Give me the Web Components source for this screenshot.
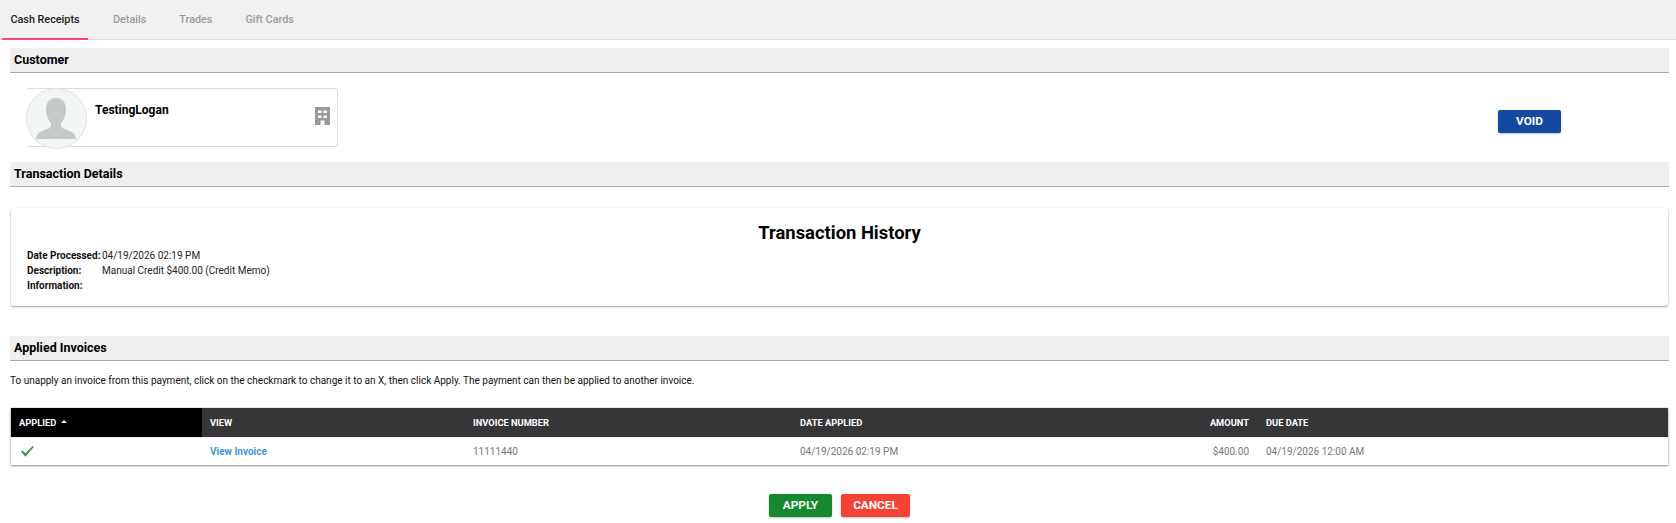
<!DOCTYPE html>
<html>
<head>
<meta charset="utf-8">
<style>
  html, body { margin: 0; padding: 0; background: #fff; }
  body { font-family: Roboto, "Liberation Sans", sans-serif; color: #000; }
</style>
</head>
<body>
<cr-page>
  <tab-bar></tab-bar>
  <section-head style="margin-top:8px">Customer</section-head>
  <customer-row name="TestingLogan"></customer-row>
  <section-head style="margin-top:10px">Transaction Details</section-head>
  <history-card></history-card>
  <section-head style="margin-top:30px">Applied Invoices</section-head>
  <p-note>To unapply an invoice from this payment, click on the checkmark to change it to an X, then click Apply. The payment can then be applied to another invoice.</p-note>
  <invoice-table></invoice-table>
  <action-bar></action-bar>
</cr-page>

<script>
class CrPage extends HTMLElement {
    constructor() {
        super();
        this.attachShadow({ mode: "open" });
        this.shadowRoot.innerHTML = `
        <style>
          :host { display: flex; flex-direction: column; width: 1676px; height: 523px; overflow: hidden; }
        </style>
        <slot></slot>`;
    }
}

class TabBar extends HTMLElement {
    constructor() {
        super();
        this.attachShadow({ mode: "open" });
        this.shadowRoot.innerHTML = `
        <style>
          :host { display: flex; gap: 17px; height: 39px; padding-left: 2px; background: #f1f1f1; border-bottom: 1px solid #dedede; font-size: 10.8px; }
          div { box-sizing: border-box; height: 40px; padding: 13px 8px 0; line-height: 14px; color: #9a9a9a; font-weight: 500; text-align: center; white-space: nowrap; }
          .on { width: 86px; color: #222; border-bottom: 2px solid #ff4081; }
        </style>
        <div class="on">Cash Receipts</div>
        <div>Details</div>
        <div>Trades</div>
        <div>Gift Cards</div>`;
    }
}

class SectionHead extends HTMLElement {
    constructor() {
        super();
        this.attachShadow({ mode: "open" });
        this.shadowRoot.innerHTML = `
        <style>
          :host { display: block; box-sizing: border-box; height: 25px; margin: 0 7px 0 10px; padding: 0 4px; background: #efefef; border-bottom: 1px solid #a8a8a8; font-size: 12.5px; font-weight: 700; line-height: 23px; }
        </style>
        <slot></slot>`;
    }
}

class CustomerRow extends HTMLElement {
    constructor() {
        super();
        this.attachShadow({ mode: "open" });
        this.shadowRoot.innerHTML = `
        <style>
          :host { display: flex; height: 79px; padding: 15px 115px 0 26px; box-sizing: border-box; justify-content: space-between; }
          .card { position: relative; box-sizing: border-box; width: 312px; height: 59px; border: 1px solid #dcdcdc; border-radius: 3px; border-left-color: transparent; }
          .avatar { position: absolute; left: -1px; top: -1px; width: 61px; height: 61px; }
          .name { position: absolute; left: 68px; top: 14px; font-size: 12px; font-weight: 700; line-height: 14px; }
          .org { position: absolute; right: 7px; top: 18px; width: 15px; height: 18px; }
          .void { margin-top: 22px; }
        </style>
        <div class="card">
          <svg class="avatar" viewBox="0 0 61 61">
            <circle cx="30.5" cy="30.500" r="30" fill="#f3f6f7" stroke="#dfe2e3"/>
            <path fill="#c3c8c9" d="M30 10c-6 0-10 4.500-10 11 0 5 2 10 4 13 1.500 2 1.500 4.500-.5 6-3 2-10 3-12 6.500-1 1.500-1.500 3-1.500 4.500h40c0-1.500-.5-3-1.500-4.500-2-3.500-9-4.500-12-6.500-2-1.500-2-4-.5-6 2-3 4-8 4-13 0-6.500-4-11-10-11z"/>
          </svg>
          <div class="name"></div>
          <svg class="org" viewBox="0 0 15 18">
            <path fill="#9a9a9a" fill-rule="evenodd" d="M0 0h15v18H9.500v-4.500h-4V18H0zM3 3.500v2.500h3.500V3.500zm5.500 0v2.500H12V3.500zM3 8.500V11h3.500V8.500zm5.500 0V11H12V8.500z"/>
          </svg>
        </div>
        <flat-button class="void" color="#1548a0" width="63">VOID</flat-button>`;
    }

    connectedCallback() {
        this.shadowRoot.querySelector(".name").textContent = this.getAttribute("name");
    }
}

class HistoryCard extends HTMLElement {
    constructor() {
        super();
        this.attachShadow({ mode: "open" });
        this.shadowRoot.innerHTML = `
        <style>
          :host { display: block; box-sizing: border-box; height: 98px; margin: 21px 8px 0 11px; padding: 14px 16px 0; border-radius: 3px; background: #fff; box-shadow: 0 1px 2px rgba(0,0,0,.38), 0 0 2px rgba(0,0,0,.06); }
          h2 { margin: 0 0 5px; font-size: 18.4px; font-weight: 700; line-height: 21px; text-align: center; }
          dl { display: grid; grid-template-columns: 75px 1fr; grid-auto-rows: 15px; margin: 0; font-size: 10px; line-height: 15px; color: #222; }
          dt { font-weight: 700; color: #111; }
          dd { margin: 0; }
        </style>
        <h2>Transaction History</h2>
        <dl>
          <dt>Date Processed:</dt><dd>04/19/2026 02:19 PM</dd>
          <dt>Description:</dt><dd>Manual Credit $400.00 (Credit Memo)</dd>
          <dt>Information:</dt><dd></dd>
        </dl>`;
    }
}

class PNote extends HTMLElement {
    constructor() {
        super();
        this.attachShadow({ mode: "open" });
        this.shadowRoot.innerHTML = `
        <style>
          :host { display: block; margin: 13px 8px 0 10px; font-size: 10px; line-height: 14px; color: #111; }
        </style>
        <slot></slot>`;
    }
}

class InvoiceTable extends HTMLElement {
    constructor() {
        super();
        this.attachShadow({ mode: "open" });
        this.shadowRoot.innerHTML = `
        <style>
          :host { display: block; margin: 20px 8px 0 11px; box-shadow: 0 1px 2px rgba(0,0,0,.4), 0 0 2px rgba(0,0,0,.2); }
          .row { display: grid; grid-template-columns: 191px 263px 327px 308px 158px 1fr; }
          .head { height: 29px; background: #363638; color: #fff; font-size: 9.3px; font-weight: 700; line-height: 29px; }
          .body { height: 28px; background: #fff; color: #777; font-size: 10px; line-height: 28px; border-top: 1px solid #eee; box-sizing: border-box; }
          .c { padding-left: 8px; white-space: nowrap; }
          .sorted { background: #000; display: flex; align-items: center; gap: 5px; }
          .caret { width: 0; height: 0; border: 3px solid transparent; border-top: 0; border-bottom: 3px solid #fff; margin-top: -3px; }
          .r { text-align: right; padding: 0 9px 0 0; }
          a { color: #3f97d8; font-weight: 700; text-decoration: none; }
          svg { display: block; width: 13px; height: 11px; margin: 8px 0 0 2px; }
        </style>
        <div class="row head">
          <div class="c sorted">APPLIED <span class="caret"></span></div>
          <div class="c">VIEW</div>
          <div class="c">INVOICE NUMBER</div>
          <div class="c">DATE APPLIED</div>
          <div class="c r">AMOUNT</div>
          <div class="c">DUE DATE</div>
        </div>
        <div class="row body">
          <div class="c"><svg viewBox="0 0 13 11"><path d="M0 5.800l1.500-1.400 3 2.800L11.800 0l1.200.8-8.500 10z" fill="#3d9142"/></svg></div>
          <div class="c"><a>View Invoice</a></div>
          <div class="c">11111440</div>
          <div class="c">04/19/2026 02:19 PM</div>
          <div class="c r">$400.00</div>
          <div class="c">04/19/2026 12:00 AM</div>
        </div>`;
    }
}

class ActionBar extends HTMLElement {
    constructor() {
        super();
        this.attachShadow({ mode: "open" });
        this.shadowRoot.innerHTML = `
        <style>
          :host { display: flex; justify-content: center; gap: 9px; margin-top: 29px; padding-left: 3px; }
        </style>
        <flat-button color="#15892f" width="63">APPLY</flat-button>
        <flat-button color="#f44336" width="69">CANCEL</flat-button>`;
    }
}

class FlatButton extends HTMLElement {
    constructor() {
        super();
        this.attachShadow({ mode: "open" });
        this.shadowRoot.innerHTML = `
        <style>
          :host { display: block; box-sizing: border-box; height: 23px; border-radius: 2px; color: #fff; font-size: 11.8px; font-weight: 700; line-height: 23px; text-align: center; box-shadow: 0 1px 2px rgba(0,0,0,.25); }
        </style>
        <slot></slot>`;
    }

    connectedCallback() {
        this.style.background = this.getAttribute("color");
        this.style.width = this.getAttribute("width") + "px";
    }
}

customElements.define("flat-button", FlatButton);
customElements.define("cr-page", CrPage);
customElements.define("tab-bar", TabBar);
customElements.define("section-head", SectionHead);
customElements.define("customer-row", CustomerRow);
customElements.define("history-card", HistoryCard);
customElements.define("p-note", PNote);
customElements.define("invoice-table", InvoiceTable);
customElements.define("action-bar", ActionBar);
</script>
</body>
</html>
